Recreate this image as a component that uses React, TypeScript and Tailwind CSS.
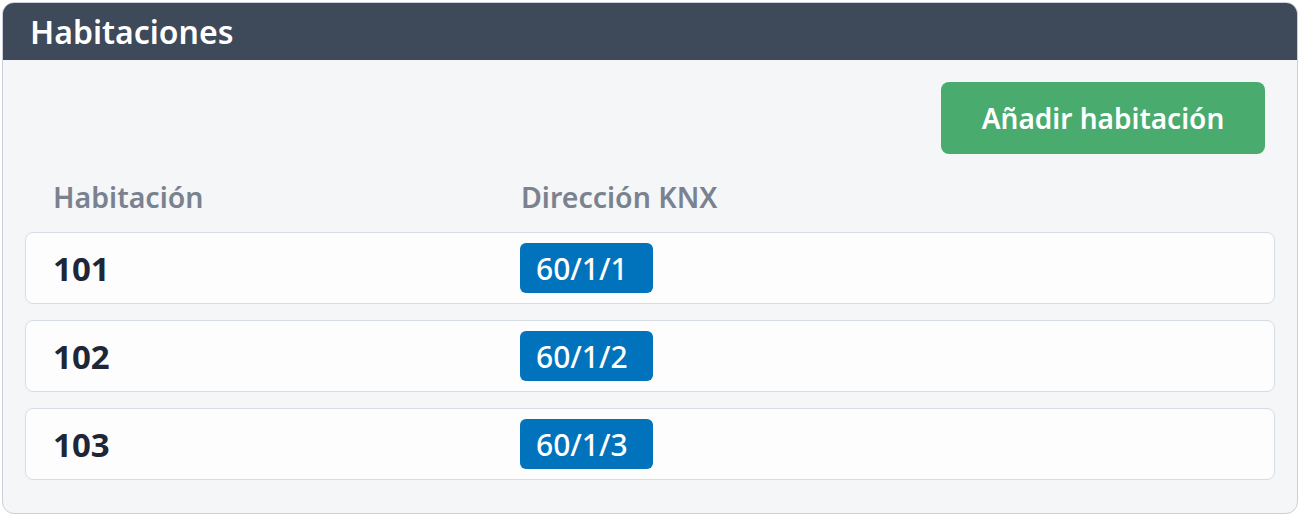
const rooms = [
  { name: "101", knx: "60/1/1" },
  { name: "102", knx: "60/1/2" },
  { name: "103", knx: "60/1/3" },
];

export default function App() {
  return (
    <div className="h-[516px] w-[1300px] bg-white p-[2px] font-['Noto_Sans',sans-serif]">
      <section className="flex h-full flex-col overflow-hidden rounded-[12px] border border-[#c9d0da] bg-[#f4f6f8]">
        <header className="flex h-[57px] shrink-0 items-center bg-[#3e4959] px-[27px]">
          <h2 className="text-[32px] font-semibold leading-none text-white">Habitaciones</h2>
        </header>

        <div className="flex flex-1 flex-col px-[22px] pt-[22px]">
          <div className="flex justify-end pr-[10px]">
            <button
              type="button"
              className="h-[72px] w-[324px] rounded-[8px] bg-[#4aab6e] text-[28px] font-semibold text-white"
            >
              Añadir habitación
            </button>
          </div>

          <div className="mt-[23px] grid h-[40px] grid-cols-[468px_1fr] items-center px-[28px] text-[28.5px] font-semibold leading-none text-[#7b828f]">
            <div>Habitación</div>
            <div>Dirección KNX</div>
          </div>

          <div className="mt-[15px] flex flex-col gap-[16px]">
            {rooms.map((room) => (
              <div
                key={room.name}
                className="grid h-[72px] grid-cols-[467px_1fr] items-center rounded-[8px] border border-[#d6dce4] bg-[#fdfdfd] px-[27px]"
              >
                <div className="text-[33px] font-bold leading-none text-[#1f2635]">{room.name}</div>
                <div>
                  <span className="inline-flex h-[50px] w-[133px] items-center rounded-[6px] bg-[#0073bc] px-[16px] text-[30px] font-medium text-white">
                    {room.knx}
                  </span>
                </div>
              </div>
            ))}
          </div>
        </div>
      </section>
    </div>
  );
}
